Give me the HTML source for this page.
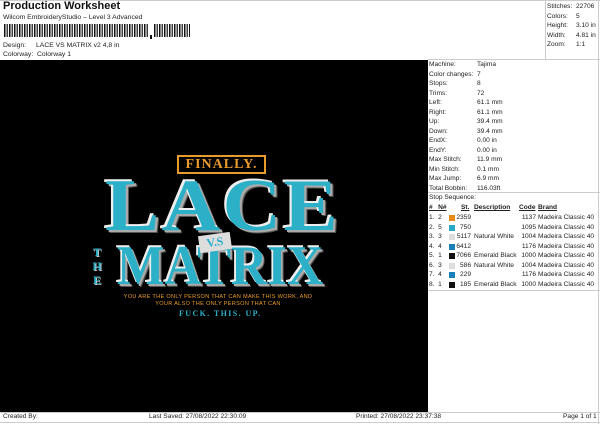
<!DOCTYPE html>
<html><head><style>
*{margin:0;padding:0;box-sizing:border-box}
body{width:600px;height:424px;background:#fff;font-family:"Liberation Sans",sans-serif;color:#222;position:relative;overflow:hidden;font-size:6.6px}
.a{position:absolute;white-space:nowrap}
.sw{display:inline-block;width:6px;height:6px;vertical-align:-1px}
.lg{font-family:'Liberation Serif',serif;font-weight:bold;color:#2bb0c8;text-shadow:-2px -2px 0 #eee,2px 2px 0 #aaa,3px 3px 0 #555;transform-origin:left top}
</style></head><body>
<div class="a" style="left:3px;top:0px;font-size:11px;font-weight:bold;color:#111">Production Worksheet</div>
<div class="a" style="left:3px;top:14px;font-size:6.8px">Wilcom EmbroideryStudio – Level 3 Advanced</div>
<svg class="a" style="left:4px;top:24px" width="186" height="16">
<defs><pattern id="bc" width="5" height="13" patternUnits="userSpaceOnUse"><rect x="0" width="1.5" height="13" fill="#111"/><rect x="2.6" width="1.2" height="13" fill="#111"/></pattern></defs>
<rect x="0" y="0" width="145" height="13" fill="url(#bc)"/>
<rect x="150" y="0" width="36" height="13" fill="url(#bc)"/>
<rect x="146" y="11" width="2" height="4" fill="#111"/>
</svg>
<div class="a" style="left:3px;top:42px;font-size:6.8px">Design:</div>
<div class="a" style="left:36px;top:42px;font-size:6.8px">LACE VS MATRIX v2 4,8 in</div>
<div class="a" style="left:3px;top:51px;font-size:6.8px">Colorway:&nbsp; Colorway 1</div>
<div class="a" style="left:0;top:0;width:600px;height:1px;background:#ccc"></div>
<div class="a" style="left:545px;top:0;width:1px;height:60px;background:#ccc"></div>
<div class="a" style="left:598px;top:0;width:1px;height:424px;background:#ccc"></div>
<div class="a" style="left:547px;top:2px;line-height:9.5px">Stitches:<br>Colors:<br>Height:<br>Width:<br>Zoom:</div>
<div class="a" style="left:576px;top:2px;line-height:9.5px">22706<br>5<br>3.10 in<br>4.81 in<br>1:1</div>
<div class="a" style="left:0;top:60px;width:428px;height:352px;background:#000"></div>
<div class="a" style="left:428px;top:59px;width:172px;height:1px;background:#ccc"></div>
<div class="a" style="left:429px;top:60px;line-height:9.5px">Machine:<br>Color changes:<br>Stops:<br>Trims:<br>Left:<br>Right:<br>Up:<br>Down:<br>EndX:<br>EndY:<br>Max Stitch:<br>Min Stitch:<br>Max Jump:<br>Total Bobbin:</div>
<div class="a" style="left:477px;top:60px;line-height:9.5px">Tajima<br>7<br>8<br>72<br>61.1 mm<br>61.1 mm<br>39.4 mm<br>39.4 mm<br>0.00 in<br>0.00 in<br>11.9 mm<br>0.1 mm<br>6.9 mm<br>116.03ft</div>
<div class="a" style="left:428px;top:192px;width:172px;height:1px;background:#ccc"></div>
<div class="a" style="left:429px;top:193px;line-height:9.5px">Stop Sequence:</div>
<div class="a" style="left:429px;top:203px;line-height:9.5px;font-weight:bold;text-decoration:underline">#&nbsp;&nbsp; N#</div>
<div class="a" style="left:461px;top:203px;font-weight:bold;text-decoration:underline;line-height:9.5px">St.</div>
<div class="a" style="left:474px;top:203px;font-weight:bold;text-decoration:underline;line-height:9.5px">Description</div>
<div class="a" style="left:519px;top:203px;font-weight:bold;text-decoration:underline;line-height:9.5px">Code</div>
<div class="a" style="left:538px;top:203px;font-weight:bold;text-decoration:underline;line-height:9.5px">Brand</div>
<div class="a" style="left:429px;top:213px;line-height:9.5px">1.&nbsp; 2<br>2.&nbsp; 5<br>3.&nbsp; 3<br>4.&nbsp; 4<br>5.&nbsp; 1<br>6.&nbsp; 3<br>7.&nbsp; 4<br>8.&nbsp; 1</div>
<div class="a" style="left:449px;top:214px;line-height:9.5px">
<span class="sw" style="background:#e88a1a"></span><br><span class="sw" style="background:#2aa6c8"></span><br><span class="sw" style="background:#ddd"></span><br><span class="sw" style="background:#1a7fb8"></span><br><span class="sw" style="background:#111"></span><br><span class="sw" style="background:#ddd"></span><br><span class="sw" style="background:#1a7fb8"></span><br><span class="sw" style="background:#111"></span></div>
<div class="a" style="left:454px;top:213px;line-height:9.5px;width:17px;text-align:right">2359<br>750<br>5117<br>6412<br>7066<br>586<br>229<br>185</div>
<div class="a" style="left:474px;top:213px;line-height:9.5px"><br><br>Natural White<br><br>Emerald Black<br>Natural White<br><br>Emerald Black</div>
<div class="a" style="left:519px;top:213px;line-height:9.5px;width:17px;text-align:right">1137<br>1095<br>1004<br>1176<br>1000<br>1004<br>1176<br>1000</div>
<div class="a" style="left:538px;top:213px;line-height:9.5px">Madeira Classic 40<br>Madeira Classic 40<br>Madeira Classic 40<br>Madeira Classic 40<br>Madeira Classic 40<br>Madeira Classic 40<br>Madeira Classic 40<br>Madeira Classic 40</div>
<div class="a" style="left:428px;top:290px;width:172px;height:1px;background:#ccc"></div>
<div class="a" style="left:0;top:412px;width:600px;height:1px;background:#ccc"></div>
<div class="a" style="left:0;top:422px;width:600px;height:1px;background:#ccc"></div>
<div class="a" style="left:3px;top:413px">Created By:</div>
<div class="a" style="left:149px;top:413px">Last Saved: 27/08/2022 22:30:09</div>
<div class="a" style="left:356px;top:413px">Printed: 27/08/2022 23:37:38</div>
<div class="a" style="left:563px;top:413px">Page 1 of 1</div>
<!-- design -->
<div class="a" style="left:177px;top:155px;width:89px;height:19px;border:2px solid #e89a2a;color:#e89a2a;font-family:'Liberation Serif',serif;font-weight:bold;font-size:14px;line-height:15px;text-align:center;letter-spacing:1px">FINALLY.</div>
<div class="a lg" style="left:105px;top:169px;font-size:74px;line-height:74px;letter-spacing:2px;transform:scaleX(1.1)">LACE</div>
<div class="a lg" style="left:117px;top:238px;font-size:56px;line-height:56px;transform:scaleX(0.9)">MATRIX</div>
<div class="a" style="left:199px;top:234px;width:32px;height:17px;background:#ddd;color:#2bb0c8;font-family:'Liberation Serif',serif;font-weight:bold;font-size:12px;line-height:17px;text-align:center;transform:rotate(-8deg)">V.S</div>
<div class="a" style="left:92px;top:245px;width:10px;color:#2bb0c8;font-family:'Liberation Serif',serif;font-weight:bold;font-size:12px;line-height:14px;text-align:center;text-shadow:1px 1px 0 #ccc">T<br>H<br>E</div>
<div class="a" style="left:118px;top:294px;width:200px;text-align:center;color:#e89a2a;font-size:5.6px;line-height:7px;letter-spacing:0.3px">YOU ARE THE ONLY PERSON THAT CAN MAKE THIS WORK, AND<br>YOUR ALSO THE ONLY PERSON THAT CAN</div>
<div class="a" style="left:179px;top:309px;color:#2bb0c8;font-family:'Liberation Serif',serif;font-weight:bold;font-size:8px;letter-spacing:1.4px">FUCK. THIS. UP.</div>
</body></html>
